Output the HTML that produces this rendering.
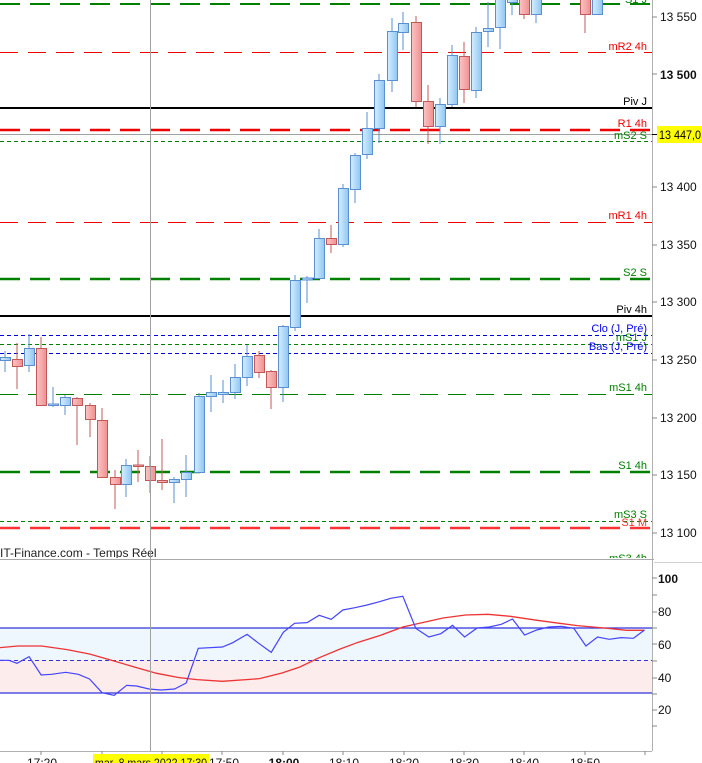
<!DOCTYPE html>
<html><head><meta charset="utf-8"><style>
html,body{margin:0;padding:0;background:#fff;width:702px;height:763px;overflow:hidden}
svg{display:block;font-family:"Liberation Sans",sans-serif}
</style></head><body>
<svg width="702" height="763" viewBox="0 0 702 763" xmlns="http://www.w3.org/2000/svg">
<defs>
<linearGradient id="gb" x1="0" x2="1" y1="0" y2="0"><stop offset="0" stop-color="#d6eeff"/><stop offset="1" stop-color="#8ec6f4"/></linearGradient>
<linearGradient id="gr" x1="0" x2="1" y1="0" y2="0"><stop offset="0" stop-color="#fcc4c4"/><stop offset="1" stop-color="#f09090"/></linearGradient>
<clipPath id="cp"><rect x="0" y="0" width="652" height="558"/></clipPath>
</defs>
<rect width="702" height="763" fill="#fff"/>
<rect x="0" y="628" width="652" height="32" fill="#eef6fe"/>
<rect x="0" y="660" width="652" height="33" fill="#fdecec"/>
<g clip-path="url(#cp)">
<line x1="0" x2="652" y1="4" y2="4" stroke="#008000" stroke-width="2" stroke-dasharray="20 10"/>
<line x1="0" x2="652" y1="52.5" y2="52.5" stroke="#ee0000" stroke-width="1" stroke-dasharray="18 10"/>
<line x1="0" x2="652" y1="108" y2="108" stroke="#000" stroke-width="2"/>
<line x1="0" x2="652" y1="130" y2="130" stroke="#ee0000" stroke-width="2.5" stroke-dasharray="20 10"/>
<line x1="0" x2="652" y1="134.5" y2="134.5" stroke="#a0a0a0" stroke-width="1"/>
<line x1="0" x2="652" y1="141.5" y2="141.5" stroke="#008000" stroke-width="1" stroke-dasharray="4 3"/>
<line x1="0" x2="652" y1="222.5" y2="222.5" stroke="#ee0000" stroke-width="1" stroke-dasharray="18 10"/>
<line x1="0" x2="652" y1="279" y2="279" stroke="#008000" stroke-width="2.5" stroke-dasharray="20 10"/>
<line x1="0" x2="652" y1="316" y2="316" stroke="#000" stroke-width="2"/>
<line x1="0" x2="652" y1="335.5" y2="335.5" stroke="#0000dd" stroke-width="1" stroke-dasharray="4 3"/>
<line x1="0" x2="652" y1="344.5" y2="344.5" stroke="#008000" stroke-width="1" stroke-dasharray="4 3"/>
<line x1="0" x2="652" y1="353.5" y2="353.5" stroke="#0000dd" stroke-width="1" stroke-dasharray="4 3"/>
<line x1="0" x2="652" y1="394.5" y2="394.5" stroke="#008000" stroke-width="1" stroke-dasharray="18 10"/>
<line x1="0" x2="652" y1="472" y2="472" stroke="#008000" stroke-width="2.5" stroke-dasharray="20 10"/>
<line x1="0" x2="652" y1="521.5" y2="521.5" stroke="#008000" stroke-width="1" stroke-dasharray="4 3"/>
<line x1="0" x2="652" y1="528" y2="528" stroke="#ff3333" stroke-width="2.5" stroke-dasharray="20 10"/>
<g stroke-width="1">
<g stroke="#5b8fd0" fill="url(#gb)">
<line x1="5" x2="5" y1="351" y2="372"/><rect x="0.5" y="357.5" width="10" height="3"/>
<line x1="29" x2="29" y1="334" y2="372"/><rect x="24.5" y="348.5" width="10" height="17"/>
<line x1="53" x2="53" y1="387" y2="407"/><rect x="48.5" y="404" width="10" height="1.5"/>
<line x1="65" x2="65" y1="395" y2="415"/><rect x="60.5" y="397.5" width="10" height="8"/>
<line x1="126" x2="126" y1="459" y2="497"/><rect x="121.5" y="465.5" width="10" height="19"/>
<line x1="174" x2="174" y1="477" y2="503"/><rect x="169.5" y="479.5" width="10" height="3"/>
<line x1="186" x2="186" y1="455" y2="497"/><rect x="181.5" y="472.5" width="10" height="7"/>
<line x1="199" x2="199" y1="393" y2="473"/><rect x="194.5" y="396.5" width="10" height="76"/>
<line x1="211" x2="211" y1="375" y2="412"/><rect x="206.5" y="392.5" width="10" height="4"/>
<line x1="223" x2="223" y1="380" y2="403"/><rect x="218.5" y="392.5" width="10" height="2"/>
<line x1="235" x2="235" y1="364" y2="399"/><rect x="230.5" y="377.5" width="10" height="15"/>
<line x1="247" x2="247" y1="345" y2="386"/><rect x="242.5" y="356.5" width="10" height="21"/>
<line x1="283" x2="283" y1="325" y2="402"/><rect x="278.5" y="326.5" width="10" height="61"/>
<line x1="295" x2="295" y1="275" y2="331"/><rect x="290.5" y="280.5" width="10" height="47"/>
<line x1="307" x2="307" y1="276" y2="303"/><rect x="302.5" y="278" width="10" height="2"/>
<line x1="319" x2="319" y1="229" y2="279"/><rect x="314.5" y="238.5" width="10" height="40"/>
<line x1="343" x2="343" y1="184" y2="247"/><rect x="338.5" y="188.5" width="10" height="56"/>
<line x1="355" x2="355" y1="153" y2="203"/><rect x="350.5" y="155.5" width="10" height="34"/>
<line x1="367" x2="367" y1="112" y2="159"/><rect x="362.5" y="128.5" width="10" height="26"/>
<line x1="379" x2="379" y1="74" y2="143"/><rect x="374.5" y="80.5" width="10" height="48"/>
<line x1="392" x2="392" y1="18" y2="92"/><rect x="387.5" y="31.5" width="10" height="49"/>
<line x1="403" x2="403" y1="12" y2="50"/><rect x="398.5" y="23.5" width="10" height="9"/>
<line x1="440" x2="440" y1="98" y2="144"/><rect x="435.5" y="104.5" width="10" height="22"/>
<line x1="452" x2="452" y1="45" y2="107"/><rect x="447.5" y="55.5" width="10" height="49"/>
<line x1="476" x2="476" y1="27" y2="98"/><rect x="471.5" y="32.5" width="10" height="58"/>
<line x1="488" x2="488" y1="2" y2="47"/><rect x="483.5" y="28.5" width="10" height="3"/>
<line x1="500" x2="500" y1="0" y2="49"/><rect x="495.5" y="-1" width="10" height="28.5"/>
<line x1="512" x2="512" y1="0" y2="15"/><rect x="507.5" y="-1" width="10" height="3.5"/>
<line x1="536" x2="536" y1="0" y2="23"/><rect x="531.5" y="-1" width="10" height="15.5"/>
<rect x="592.5" y="-1" width="10" height="15.5"/>
</g>
<g stroke="#c05858" fill="url(#gr)">
<line x1="17" x2="17" y1="343" y2="389"/><rect x="12.5" y="359.5" width="10" height="7"/>
<line x1="41" x2="41" y1="337" y2="405"/><rect x="36.5" y="348.5" width="10" height="57"/>
<line x1="77" x2="77" y1="397" y2="445"/><rect x="72.5" y="398.5" width="10" height="7"/>
<line x1="90" x2="90" y1="403" y2="437"/><rect x="85.5" y="405.5" width="10" height="14"/>
<line x1="102" x2="102" y1="408" y2="478"/><rect x="97.5" y="420.5" width="10" height="57"/>
<line x1="115" x2="115" y1="470" y2="509"/><rect x="110.5" y="477.5" width="10" height="7"/>
<line x1="138" x2="138" y1="450" y2="482"/><rect x="133.5" y="465" width="10" height="1.5"/>
<line x1="150" x2="150" y1="456" y2="493"/><rect x="145.5" y="466.5" width="10" height="14"/>
<line x1="162" x2="162" y1="439" y2="490"/><rect x="157.5" y="480.5" width="10" height="2"/>
<line x1="259" x2="259" y1="351" y2="378"/><rect x="254.5" y="355.5" width="10" height="17"/>
<line x1="271" x2="271" y1="370" y2="409"/><rect x="266.5" y="371.5" width="10" height="16"/>
<line x1="331" x2="331" y1="225" y2="253"/><rect x="326.5" y="238.5" width="10" height="6"/>
<line x1="416" x2="416" y1="16" y2="107"/><rect x="411.5" y="22.5" width="10" height="79"/>
<line x1="428" x2="428" y1="85" y2="144"/><rect x="423.5" y="101.5" width="10" height="25"/>
<line x1="464" x2="464" y1="42" y2="103"/><rect x="459.5" y="56.5" width="10" height="33"/>
<line x1="524" x2="524" y1="0" y2="19"/><rect x="519.5" y="-1" width="10" height="15.5"/>
<line x1="585" x2="585" y1="0" y2="33"/><rect x="580.5" y="-1" width="10" height="15.5"/>
</g>
</g>
<g font-size="11" text-anchor="end">
<text x="647" y="3" fill="#008000">S1 J</text>
<text x="647" y="50" fill="#ee0000">mR2 4h</text>
<text x="647" y="105" fill="#000">Piv J</text>
<text x="647" y="127" fill="#ee0000">R1 4h</text>
<text x="647" y="139" fill="#008000">mS2 S</text>
<text x="647" y="219" fill="#ee0000">mR1 4h</text>
<text x="647" y="276" fill="#008000">S2 S</text>
<text x="647" y="313" fill="#000">Piv 4h</text>
<text x="647" y="332" fill="#0000ee">Clo (J, Pré)</text>
<text x="647" y="341" fill="#008000">mS1 J</text>
<text x="647" y="350" fill="#0000ee">Bas (J, Pré)</text>
<text x="647" y="391" fill="#008000">mS1 4h</text>
<text x="647" y="469" fill="#008000">S1 4h</text>
<text x="647" y="518" fill="#008000">mS3 S</text>
<text x="647" y="526" fill="#ff3333">S1 M</text>
<text x="647" y="562" fill="#008000">mS3 4h</text>
</g>
<text x="0" y="557" font-size="12" fill="#222">IT-Finance.com - Temps Réel</text>
</g>
<line x1="0" x2="654" y1="559.5" y2="559.5" stroke="#a8a8a8"/>
<line x1="654" x2="702" y1="562.5" y2="562.5" stroke="#d0d0d0"/>
<line x1="0" x2="652" y1="628" y2="628" stroke="#3333dd" stroke-width="1.2"/>
<line x1="0" x2="652" y1="660.5" y2="660.5" stroke="#3333dd" stroke-dasharray="4 3"/>
<line x1="0" x2="652" y1="693" y2="693" stroke="#3333dd" stroke-width="1.2"/>
<g transform="translate(0,555) scale(0.4476,0.3333)">
<polyline fill="none" stroke="#ee3333" stroke-width="1.3" vector-effect="non-scaling-stroke" points="0,278 40,273 93,273 150,284 200,297 250,316 300,336 350,355 400,368 440,374 497,379 580,371 630,354 670,336 710,310 760,282 800,262 850,241 900,216 950,201 990,189 1040,180 1090,178 1140,184 1200,196 1250,205 1290,212 1350,219 1400,226 1440,226"/>
<polyline fill="none" stroke="#4444ff" stroke-width="1.2" vector-effect="non-scaling-stroke" points="0,316 20,316 38,325 65,305 92,360 115,358 147,352 175,358 200,372 228,413 255,421 283,391 305,393 333,402 360,405 390,402 416,384 443,280 497,276 520,263 552,238 578,265 606,292 633,232 658,205 686,203 713,181 740,193 766,165 793,158 820,150 848,140 873,130 900,124 929,220 958,246 985,236 1011,211 1038,246 1066,219 1093,216 1120,208 1145,192 1172,240 1199,225 1226,216 1254,214 1282,220 1309,273 1335,246 1361,253 1388,248 1415,250 1440,225"/>
</g>
<line x1="150.5" x2="150.5" y1="0" y2="752" stroke="#a0a0a0"/>
<line x1="652.5" x2="652.5" y1="0" y2="751" stroke="#b0b0b0"/>
<g stroke="#888">
<line x1="652" x2="657" y1="17" y2="17"/><line x1="652" x2="657" y1="74" y2="74"/>
<line x1="652" x2="657" y1="187" y2="187"/><line x1="652" x2="657" y1="245" y2="245"/>
<line x1="652" x2="657" y1="302" y2="302"/><line x1="652" x2="657" y1="360" y2="360"/>
<line x1="652" x2="657" y1="418" y2="418"/><line x1="652" x2="657" y1="475" y2="475"/>
<line x1="652" x2="657" y1="533" y2="533"/>
<line x1="652" x2="657" y1="578" y2="578"/><line x1="652" x2="657" y1="595" y2="595"/><line x1="652" x2="657" y1="612" y2="612"/>
<line x1="652" x2="657" y1="628" y2="628"/><line x1="652" x2="657" y1="644" y2="644"/><line x1="652" x2="657" y1="661" y2="661"/>
<line x1="652" x2="657" y1="678" y2="678"/><line x1="652" x2="657" y1="694" y2="694"/><line x1="652" x2="657" y1="710" y2="710"/>
<line x1="652" x2="657" y1="726" y2="726"/>
<line x1="652" x2="660" y1="134.5" y2="134.5" stroke="#000"/>
</g>
<g font-size="12" fill="#111">
<text x="660" y="21">13 550</text>
<text x="660" y="79" font-weight="bold">13 500</text>
<text x="660" y="191">13 400</text>
<text x="660" y="249">13 350</text>
<text x="660" y="306">13 300</text>
<text x="660" y="364">13 250</text>
<text x="660" y="422">13 200</text>
<text x="660" y="479">13 150</text>
<text x="660" y="537">13 100</text>
<text x="658" y="583" font-weight="bold">100</text>
<text x="658" y="616">80</text>
<text x="658" y="649">60</text>
<text x="658" y="682">40</text>
<text x="658" y="714">20</text>
</g>
<rect x="657" y="126" width="45" height="17" fill="#ffff00"/>
<text x="659" y="139" font-size="12" fill="#000" textLength="42" lengthAdjust="spacingAndGlyphs">13 447,0</text>
<line x1="0" x2="652" y1="751.5" y2="751.5" stroke="#b0b0b0"/>
<g stroke="#888">
<line x1="41" x2="41" y1="751" y2="755"/><line x1="102" x2="102" y1="751" y2="755"/><line x1="162" x2="162" y1="751" y2="755"/>
<line x1="222" x2="222" y1="751" y2="755"/><line x1="283" x2="283" y1="751" y2="755"/><line x1="343" x2="343" y1="751" y2="755"/>
<line x1="404" x2="404" y1="751" y2="755"/><line x1="464" x2="464" y1="751" y2="755"/><line x1="524" x2="524" y1="751" y2="755"/>
<line x1="585" x2="585" y1="751" y2="755"/><line x1="645" x2="645" y1="751" y2="755"/>
</g>
<g font-size="12" fill="#111" text-anchor="middle">
<text x="42" y="767">17:20</text>
<text x="224" y="767">17:50</text>
<text x="284" y="767" font-weight="bold">18:00</text>
<text x="344" y="767">18:10</text>
<text x="404" y="767">18:20</text>
<text x="464" y="767">18:30</text>
<text x="524" y="767">18:40</text>
<text x="585" y="767">18:50</text>
</g>
<rect x="93" y="754" width="116" height="10" fill="#ffff00"/>
<text x="95" y="767" font-size="12" fill="#111" textLength="112" lengthAdjust="spacingAndGlyphs">mar. 8 mars 2022 17:30</text>
</svg>
</body></html>
